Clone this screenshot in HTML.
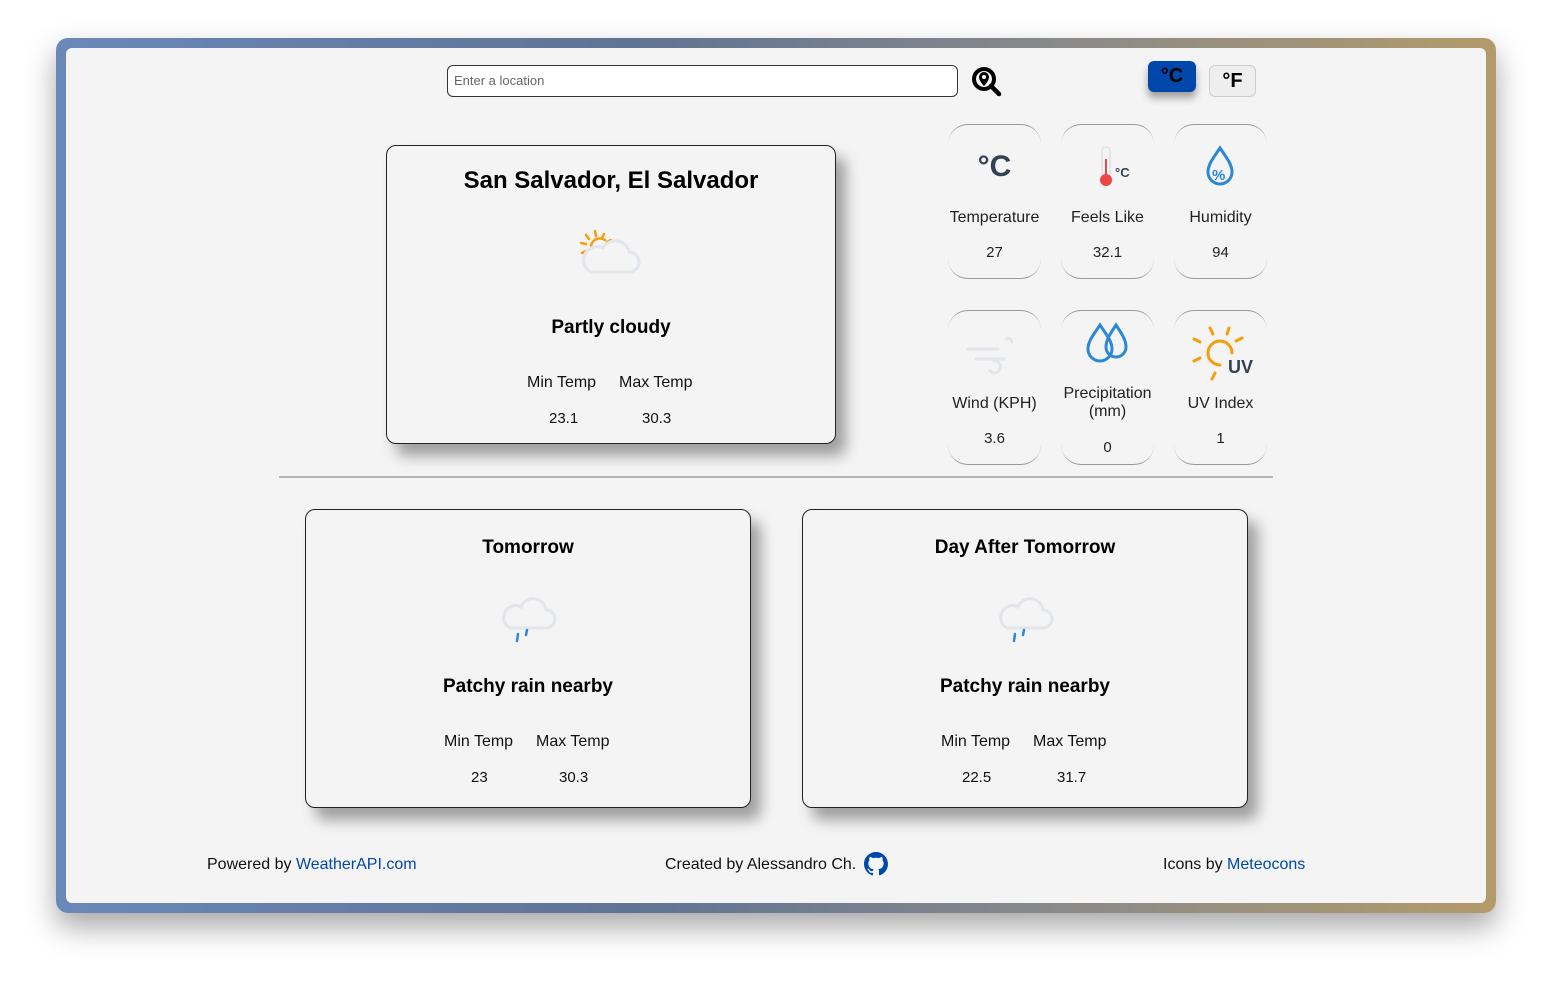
<!DOCTYPE html>
<html><head><style>
*{margin:0;padding:0;box-sizing:border-box}
body{width:1552px;height:987px;background:#fff;font-family:"Liberation Sans",sans-serif;position:relative;overflow:hidden;color:#111}
.frame{position:absolute;left:56px;top:38px;width:1440px;height:875px;border-radius:12px;background:linear-gradient(90deg,#6a88b8,#5f7394 40%,#8a8a8a 70%,#b39a6a);box-shadow:0 14px 30px rgba(0,0,0,.35)}
.inner{position:absolute;left:66px;top:48px;width:1420px;height:855px;background:#f4f4f4;border-radius:6px}
.a{position:absolute}
.card{position:absolute;border:1px solid #222;border-radius:10px;background:#f4f4f4;box-shadow:10px 12px 14px rgba(0,0,0,.35);text-align:center}
.c{position:absolute;left:0;right:0;text-align:center}
.sc{position:absolute;width:93px;height:155px;border-top:1px solid #999;border-bottom:1px solid #999;border-radius:20px;text-align:center;font-size:16px;color:#222}
a{color:#0047ab;text-decoration:none}
</style></head><body>
<div class="frame"></div>
<div class="inner"></div>
<div class="a" style="left:447px;top:65px;width:511px;height:32px;border:1px solid #333;border-radius:6px;background:#fff;font-size:13px;color:#666;padding:7px 6px">Enter a location</div>
<svg class="a" style="left:970px;top:66px" width="32" height="32" viewBox="0 0 32 32"><circle cx="14" cy="13" r="10" fill="none" stroke="#000" stroke-width="4"/><path d="M21 20l8 8" stroke="#000" stroke-width="4.5" stroke-linecap="round"/><path d="M14 6a5 5 0 0 1 5 5c0 4-5 9-5 9s-5-5-5-9a5 5 0 0 1 5-5z" fill="#000"/><circle cx="14" cy="11" r="2" fill="#fff"/></svg>
<div class="a" style="left:1148px;top:61px;width:48px;height:31px;background:#0047ab;border-radius:6px;box-shadow:0 6px 8px rgba(0,0,0,.35);color:#000;font-weight:bold;font-size:20px;text-align:center;line-height:30px">°C</div>
<div class="a" style="left:1209px;top:65px;width:47px;height:32px;background:#eee;border:1px solid #ccc;border-radius:6px;color:#000;font-weight:bold;font-size:20px;text-align:center;line-height:30px">°F</div>

<div class="card" style="left:386px;top:145px;width:450px;height:299px">
<div class="c" style="top:21px;font-size:24px;font-weight:bold;color:#000">San Salvador, El Salvador</div>
<svg class="a" style="left:190px;top:80px" width="66" height="50" viewBox="0 0 66 50"><g stroke="#f59e0b" stroke-width="2.5" stroke-linecap="round" fill="none"><path d="M14 20a9 9 0 0 1 14-6"/><path d="M18 5l1 5M9 9l3 4M4 17l5 1M5 27l4-2M27 8l-2 4M34 14l-4 2"/></g><path d="M14 46h38a10 10 0 0 0 0-20a14 14 0 0 0-26-4a11 11 0 0 0-12 24z" fill="#f4f4f4" stroke="#e2e5ea" stroke-width="3"/></svg>
<div class="c" style="top:171px;font-size:19px;font-weight:bold;color:#000">Partly cloudy</div>
<div class="a" style="left:140px;top:228px;font-size:16px">Min Temp</div>
<div class="a" style="left:232px;top:228px;font-size:16px">Max Temp</div>
<div class="a" style="left:162px;top:264px;font-size:15px">23.1</div>
<div class="a" style="left:255px;top:264px;font-size:15px">30.3</div>
</div>

<div class="sc" style="left:948px;top:124px"><div class="c" style="top:25px;font-size:30px;font-weight:bold;color:#334155">°C</div><div class="c" style="top:84px">Temperature</div><div class="c" style="top:119px;font-size:15px">27</div></div>
<div class="sc" style="left:1061px;top:124px"><svg class="a" style="left:36px;top:20px" width="40" height="44" viewBox="0 0 40 44"><rect x="5" y="2" width="8" height="30" rx="4" fill="none" stroke="#e2e5ea" stroke-width="2"/><circle cx="9" cy="35" r="6" fill="#ef4444"/><rect x="8" y="14" width="2" height="20" fill="#ef4444"/><text x="18" y="32" font-size="13" font-weight="bold" fill="#334155" font-family="Liberation Sans">°C</text></svg><div class="c" style="top:84px">Feels Like</div><div class="c" style="top:119px;font-size:15px">32.1</div></div>
<div class="sc" style="left:1174px;top:124px"><svg class="a" style="left:30px;top:20px" width="32" height="44" viewBox="0 0 32 44"><path d="M16 3C10 12 4 19 4 27a12 12 0 0 0 24 0c0-8-6-15-12-24z" fill="none" stroke="#2b88d8" stroke-width="3"/><text x="8" y="35" font-size="15" font-weight="bold" fill="#2b88d8" font-family="Liberation Sans">%</text></svg><div class="c" style="top:84px">Humidity</div><div class="c" style="top:119px;font-size:15px">94</div></div>
<div class="sc" style="left:948px;top:310px"><svg class="a" style="left:18px;top:22px" width="60" height="44" viewBox="0 0 60 44"><path d="M2 16h30M10 26h28M40 6a4 4 0 0 1 6 3M28 28a6 6 0 1 1-4 10" fill="none" stroke="#e2e5ea" stroke-width="3" stroke-linecap="round"/></svg><div class="c" style="top:84px">Wind (KPH)</div><div class="c" style="top:119px;font-size:15px">3.6</div></div>
<div class="sc" style="left:1061px;top:310px"><svg class="a" style="left:24px;top:10px" width="46" height="46" viewBox="0 0 46 46"><path d="M15 4C9 13 3 20 3 28a12 12 0 0 0 24 0c0-8-6-15-12-24z M31 4c-6 9-10 15-10 22a10 10 0 0 0 20 0c0-7-4-13-10-22z" fill="none" stroke="#2b88d8" stroke-width="3"/></svg><div class="c" style="top:74px;line-height:18px">Precipitation<br>(mm)</div><div class="c" style="top:128px;font-size:15px">0</div></div>
<div class="sc" style="left:1174px;top:310px"><svg class="a" style="left:16px;top:12px" width="64" height="60" viewBox="0 0 64 60"><g stroke="#f59e0b" stroke-width="3" stroke-linecap="round" fill="none"><path d="M42 30a12 12 0 1 0-12 12"/><path d="M20 5l3 6M39 5l-2 6M52 15l-6 3M4 16l6 3M4 38l6-3M22 56l3-6"/></g><text x="38" y="50" font-size="18" font-weight="bold" fill="#334155" font-family="Liberation Sans">UV</text></svg><div class="c" style="top:84px">UV Index</div><div class="c" style="top:119px;font-size:15px">1</div></div>

<div class="a" style="left:279px;top:476px;width:994px;height:2px;background:#b5b5b5"></div>

<div class="card" style="left:305px;top:509px;width:446px;height:299px">
<div class="c" style="top:27px;font-size:19px;font-weight:bold;color:#000">Tomorrow</div>
<svg class="a" style="left:192px;top:86px" width="62" height="52" viewBox="0 0 62 52"><path d="M12 32h36a9 9 0 0 0 0-18a13 13 0 0 0-25-3a10 10 0 0 0-11 21z" fill="none" stroke="#e2e5ea" stroke-width="3"/><path d="M20 38l-1 7M29 34l-1 5" stroke="#2b88d8" stroke-width="2.5" stroke-linecap="round"/></svg>
<div class="c" style="top:166px;font-size:19px;font-weight:bold;color:#000">Patchy rain nearby</div>
<div class="a" style="left:138px;top:223px;font-size:16px">Min Temp</div>
<div class="a" style="left:230px;top:223px;font-size:16px">Max Temp</div>
<div class="a" style="left:165px;top:259px;font-size:15px">23</div>
<div class="a" style="left:253px;top:259px;font-size:15px">30.3</div>
</div>
<div class="card" style="left:802px;top:509px;width:446px;height:299px">
<div class="c" style="top:27px;font-size:19px;font-weight:bold;color:#000">Day After Tomorrow</div>
<svg class="a" style="left:192px;top:86px" width="62" height="52" viewBox="0 0 62 52"><path d="M12 32h36a9 9 0 0 0 0-18a13 13 0 0 0-25-3a10 10 0 0 0-11 21z" fill="none" stroke="#e2e5ea" stroke-width="3"/><path d="M20 38l-1 7M29 34l-1 5" stroke="#2b88d8" stroke-width="2.5" stroke-linecap="round"/></svg>
<div class="c" style="top:166px;font-size:19px;font-weight:bold;color:#000">Patchy rain nearby</div>
<div class="a" style="left:138px;top:223px;font-size:16px">Min Temp</div>
<div class="a" style="left:230px;top:223px;font-size:16px">Max Temp</div>
<div class="a" style="left:159px;top:259px;font-size:15px">22.5</div>
<div class="a" style="left:254px;top:259px;font-size:15px">31.7</div>
</div>

<div class="a" style="left:207px;top:856px;font-size:16px">Powered by <a>WeatherAPI.com</a></div>
<div class="a" style="left:665px;top:856px;font-size:16px">Created by Alessandro Ch.</div>
<svg class="a" style="left:864px;top:852px" width="24" height="24" viewBox="0 0 16 16"><path fill="#0047ab" d="M8 0C3.6 0 0 3.6 0 8c0 3.5 2.3 6.5 5.5 7.6.4.1.5-.2.5-.4v-1.4c-2.2.5-2.7-1-2.700-1-.4-.9-.9-1.2-.9-1.2-.7-.5.1-.5.1-.5.8.1 1.2.8 1.2.8.7 1.2 1.900.9 2.300.7.1-.5.3-.9.5-1.1-1.8-.2-3.6-.9-3.6-4 0-.9.3-1.6.8-2.1-.1-.2-.4-1 .1-2.1 0 0 .7-.2 2.2.8.6-.2 1.3-.3 2-.3s1.4.1 2 .3c1.5-1 2.2-.8 2.2-.8.4 1.1.2 1.9.1 2.1.5.6.8 1.3.8 2.1 0 3.1-1.9 3.7-3.6 3.9.3.3.5.8.5 1.5v2.2c0 .2.1.5.6.4C13.7 14.5 16 11.5 16 8c0-4.4-3.6-8-8-8z"/></svg>
<div class="a" style="left:1163px;top:856px;font-size:16px">Icons by <a>Meteocons</a></div>
</body></html>
